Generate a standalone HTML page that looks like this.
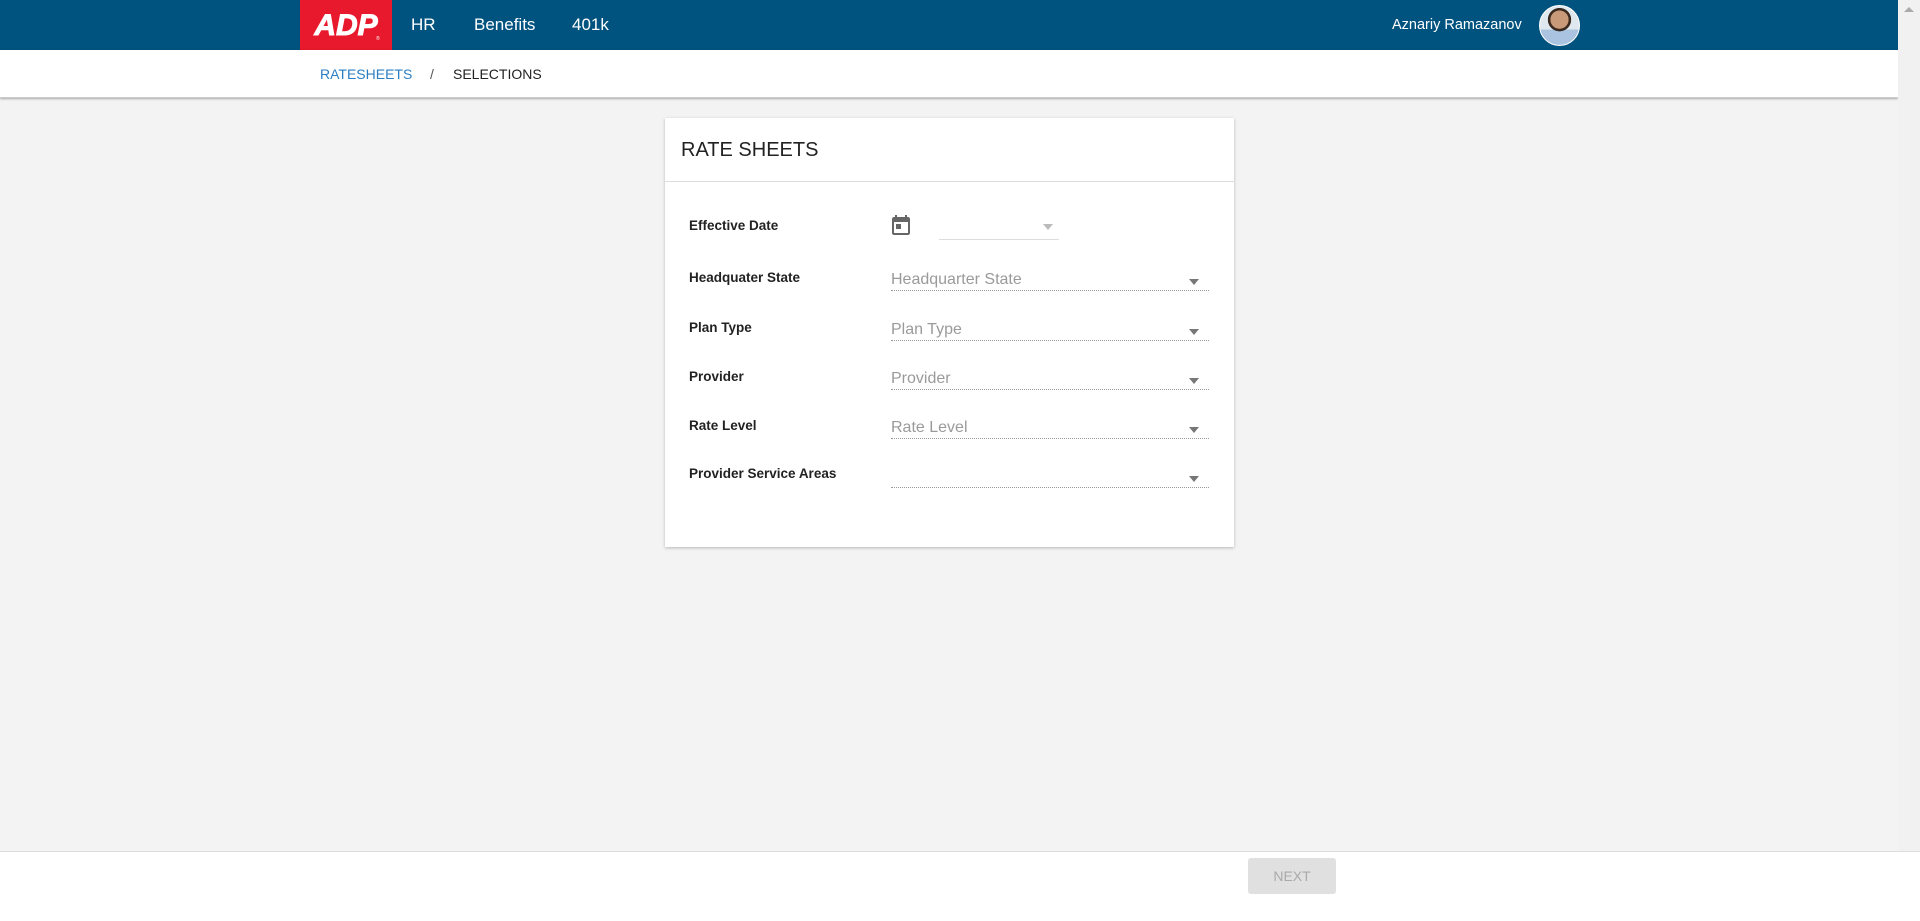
<!DOCTYPE html>
<html><head><meta charset="utf-8"><style>
*{box-sizing:border-box;margin:0;padding:0}
body{width:1920px;height:921px;overflow:hidden;background:#f3f3f3;font-family:"Liberation Sans",Arial,sans-serif;position:relative}
.hdr{position:absolute;left:0;top:0;width:1898px;height:50px;background:#00527f}
.logo{position:absolute;left:300px;top:0;width:92px;height:50px;background:#e8192c}
.nav{position:absolute;top:15px;color:#fff;font-size:17px}
.sub{position:absolute;left:0;top:50px;width:1898px;height:48px;background:#fff;box-shadow:0 1px 2px rgba(0,0,0,.3);border-bottom:1px solid #ccc}
.bc{position:absolute;top:66px;font-size:14px}
.card{position:absolute;left:665px;top:118px;width:569px;height:429px;background:#fff;box-shadow:0 1px 3px rgba(0,0,0,.25)}
.title{position:absolute;left:16px;top:21px;font-size:20px;color:#222}
.div{position:absolute;left:0;top:63px;width:100%;height:1px;background:#ddd}
.lbl{position:absolute;left:24px;font-size:13.5px;font-weight:bold;color:#222}
.sel{position:absolute;left:226px;width:318px;height:20px;border-bottom:1px dotted #999;font-size:16px;color:#9a9a9a}
.arr{position:absolute;right:10px;top:8px;width:0;height:0;border-left:5px solid transparent;border-right:5px solid transparent;border-top:6px solid #777}
.foot{position:absolute;left:0;top:851px;width:1920px;height:70px;background:#fff;border-top:1px solid #ddd}
.btn{position:absolute;left:1248px;top:858px;width:88px;height:36px;background:#e0e0e0;border-radius:3px;color:#aaa;font-size:14px;text-align:center;line-height:36px}
.sb{position:absolute;left:1898px;top:0;width:22px;height:851px;background:#f1f1f1}
</style></head><body>
<div class="hdr">
 <div class="logo"><svg width="92" height="50" viewBox="0 0 92 50"><text x="46" y="35" text-anchor="middle" font-family="Liberation Sans" font-weight="bold" font-style="italic" font-size="30" fill="#fff" stroke="#fff" stroke-width="1">ADP</text><text x="76" y="40" font-size="5" fill="#fff">®</text></svg></div>
 <div class="nav" style="left:411px">HR</div>
 <div class="nav" style="left:474px">Benefits</div>
 <div class="nav" style="left:572px">401k</div>
 <div class="nav" style="left:1392px;top:17px;font-size:14.5px">Aznariy Ramazanov</div>
 <div style="position:absolute;left:1539px;top:5px;width:41px;height:41px;border-radius:50%;background:radial-gradient(circle at 50% 35%,#c89a7a 0 28%,#3a2a20 29% 36%,transparent 37%),linear-gradient(#dfe8ee 60%,#a9c3e0 61%);border:1px solid #fff"></div>
</div>
<div class="sub"></div>
<div class="bc" style="left:320px;color:#2a7fc4">RATESHEETS</div>
<div class="bc" style="left:430px;color:#555">/</div>
<div class="bc" style="left:453px;color:#222">SELECTIONS</div>
<div class="card">
 <div class="title">RATE SHEETS</div>
 <div class="div"></div>
 <div class="lbl" style="top:100px">Effective Date</div>
 <svg style="position:absolute;left:224px;top:95px" width="24" height="24" viewBox="0 0 24 24"><path fill="#666" d="M19 4h-1V2h-2v2H8V2H6v2H5c-1.1 0-2 .9-2 2v14c0 1.1.9 2 2 2h14c1.1 0 2-.9 2-2V6c0-1.1-.9-2-2-2zm0 16H5V9h14v11zM7 11h5v5H7z"/></svg>
 <div style="position:absolute;left:274px;top:102px;width:120px;height:20px;border-bottom:1px solid #ddd"><div class="arr" style="right:6px;top:4px;border-top-color:#bbb"></div></div>
 <div class="lbl" style="top:152px">Headquater State</div>
 <div class="sel" style="top:153px">Headquarter State<div class="arr"></div></div>
 <div class="lbl" style="top:202px">Plan Type</div>
 <div class="sel" style="top:203px">Plan Type<div class="arr"></div></div>
 <div class="lbl" style="top:251px">Provider</div>
 <div class="sel" style="top:252px">Provider<div class="arr"></div></div>
 <div class="lbl" style="top:300px">Rate Level</div>
 <div class="sel" style="top:301px">Rate Level<div class="arr"></div></div>
 <div class="lbl" style="top:348px">Provider Service Areas</div>
 <div class="sel" style="top:350px"><div class="arr"></div></div>
</div>
<div class="foot"></div>
<div class="btn">NEXT</div>
<div class="sb"><div style="position:absolute;left:6px;top:7px;border-left:5px solid transparent;border-right:5px solid transparent;border-bottom:5px solid #aaa"></div></div>
</body></html>
